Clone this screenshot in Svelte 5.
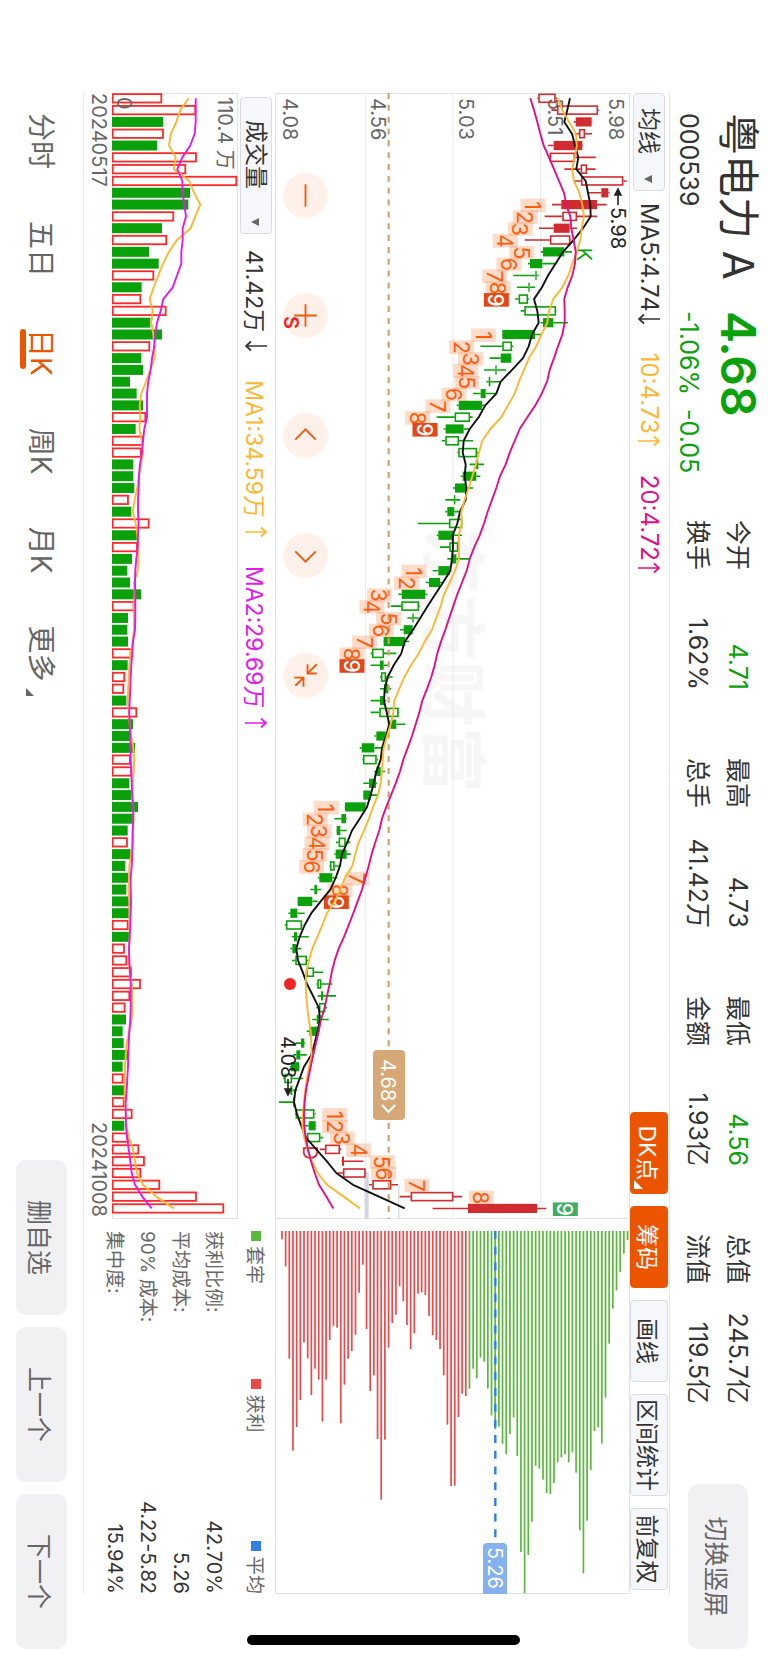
<script>
  // Kind: R/G = solid body, r/g = outlined body. Levels: low, body bottom, body top, high.
  const candles = [
    ['r', 803, 806, 858, 862], ['r', 845, 862, 985, 987], ['R', 912, 918, 966, 968], ['r', 915, 928, 946, 967],
    ['R', 835, 852, 938, 940], ['r', 836, 840, 916, 978], ['r', 884, 933, 952, 978], ['r', 916, 934, 1061, 1071],
    ['R', 952, 995, 1016, 1020], ['R', 847, 875, 982, 1011], ['r', 825, 878, 922, 983], ['R', 808, 852, 900, 922],
    ['r', 765, 841, 902, 905], ['G', 813, 820, 884, 907], ['G', 775, 781, 818, 860], ['G', 731, 797, 801, 807],
    ['G', 742, 776, 780, 796], ['g', 736, 747, 775, 778], ['g', 753, 764, 859, 860], ['G', 813, 820, 851, 895],
    ['G', 697, 698, 796, 818], ['g', 632, 698, 727, 731], ['G', 660, 693, 725, 726], ['G', 643, 677, 681, 709],
    ['G', 650, 657, 662, 694], ['G', 610, 633, 648, 680], ['G', 561, 567, 637, 645], ['g', 501, 555, 601, 609],
    ['G', 522, 528, 582, 600], ['g', 516, 527, 568, 610], ['g', 563, 566, 622, 625], ['G', 600, 618, 626, 643],
    ['G', 573, 579, 620, 632], ['G', 550, 556, 588, 610], ['G', 527, 553, 557, 572], ['G', 527, 533, 554, 575],
    ['g', 445, 538, 578, 580], ['G', 501, 506, 553, 577], ['g', 511, 539, 566, 568], ['G', 533, 547, 560, 600],
    ['G', 489, 506, 540, 545], ['G', 468, 478, 511, 517], ['G', 386, 396, 467, 473], ['g', 363, 395, 448, 450],
    ['G', 413, 428, 432, 447], ['G', 391, 402, 429, 434], ['G', 341, 342, 407, 418], ['g', 303, 307, 343, 380],
    ['G', 303, 331, 342, 357], ['g', 331, 334, 349, 369], ['G', 331, 343, 356, 365], ['G', 303, 331, 345, 350],
    ['g', 303, 329, 387, 389], ['G', 355, 363, 380, 407], ['G', 314, 320, 348, 355], ['G', 270, 276, 314, 338],
    ['g', 278, 280, 321, 325], ['G', 314, 320, 333, 347], ['G', 281, 298, 319, 322], ['G', 280, 281, 303, 325],
    ['G', 225, 226, 288, 290], ['G', 194, 215, 229, 231], ['G', 200, 201, 212, 231], ['g', 199, 207, 228, 242],
    ['G', 194, 198, 231, 243], ['g', 179, 181, 195, 212], ['G', 144, 149, 188, 203], ['G', 122, 134, 142, 155],
    ['G', 83, 84, 128, 144], ['G', 56, 62, 83, 105], ['g', 45, 49, 97, 99], ['G', 66, 73, 83, 117],
    ['G', 62, 68, 80, 95], ['g', 67, 77, 112, 116], ['g', 108, 110, 133, 160], ['g', 140, 143, 155, 188],
    ['G', 144, 154, 160, 199], ['g', 140, 148, 167, 172], ['G', 128, 141, 152, 177], ['G', 111, 119, 147, 150],
    ['G', 78, 94, 104, 106], ['G', 70, 80, 92, 111], ['G', 60, 64, 88, 90], ['g', 40, 44, 67, 100],
    ['G', 50, 62, 68, 82], ['G', 28, 70, 74, 75], ['g', 75, 78, 134, 138], ['G', 100, 117, 138, 140],
    ['g', 108, 112, 152, 160], ['r', 150, 166, 211, 215], ['R', 216, 217, 223, 281], ['r', 204, 220, 288, 290],
    ['r', 298, 308, 365, 385], ['r', 390, 423, 551, 577], ['R', 489, 595, 802, 830]
  ];

  const ma5 = [901, 893, 884, 907, 916, 926, 920, 948, 955, 962, 963, 940, 912, 880, 858, 835, 817, 793, 803,
    807, 787, 777, 760, 727, 693, 680, 647, 627, 600, 582, 579, 588, 585, 590, 588, 571, 563, 549, 550,
    547, 542, 520, 497, 474, 452, 430, 405, 395, 372, 354, 345, 343, 351, 359, 349, 337, 333, 320,
    312, 303, 292, 270, 247, 233, 217, 211, 198, 182, 153, 125, 105, 90, 80, 85, 99, 112, 130, 147,
    151, 144, 135, 125, 103, 90, 77, 73, 82, 95, 109, 140, 171, 200, 250, 328, 405];
  const ma10 = [865, 878, 898, 919, 921, 916, 907, 913, 929, 938, 943, 936, 932, 921, 908, 896, 878, 851, 838,
    833, 815, 800, 778, 763, 748, 735, 715, 695, 662, 638, 628, 619, 608, 597, 585, 575, 576, 567, 568,
    568, 556, 540, 523, 513, 500, 487, 465, 447, 424, 404, 389, 374, 371, 363, 352, 342, 339, 337,
    333, 325, 310, 298, 283, 267, 257, 248, 226, 212, 195, 172, 158, 143, 128, 118, 110, 108, 110, 113,
    117, 123, 125, 126, 118, 112, 107, 103, 100, 98, 104, 113, 127, 144, 172, 222, 271];
  const ma20 = [782, 793, 803, 812, 822, 838, 853, 868, 883, 890, 902, 905, 912, 918, 916, 908, 894, 884, 885,
    885, 878, 865, 853, 840, 832, 816, 797, 773, 750, 735, 720, 708, 691, 680, 667, 654, 643, 630, 614,
    600, 591, 577, 563, 551, 539, 527, 514, 503, 495, 485, 472, 458, 449, 438, 427, 414, 401, 391,
    378, 364, 350, 337, 329, 317, 306, 297, 287, 277, 264, 251, 237, 223, 207, 195, 186, 180, 172, 165,
    154, 147, 139, 131, 123, 116, 109, 105, 103, 104, 108, 115, 124, 135, 148, 170, 191];

  // Nine-count runs: first candle index and the level of each count label.
  const runs = [
    { start: 9, levels: [790, 767, 752, 707, 757, 718, 675, 685, 680], end: 'hot' },
    { start: 20, levels: [642, 576, 603, 588, 592, 553, 505, 444, 466], end: 'hot' },
    { start: 40, levels: [433, 411, 329, 307, 357, 335, 285, 247, 247], end: 'hot' },
    { start: 60, levels: [170, 137, 149, 142, 136, 126, 262, 211, 200], end: 'hot' },
    { start: 86, levels: [195, 195, 218, 267, 338, 342, 442, 635, 887], end: 'cool' }
  ];
  const counts = runs.flatMap((r) =>
    r.levels.map((level, k) => ({ i: r.start + k, level, n: k + 1, kind: k === 8 ? r.end : 'plain' }))
  );

  const rising = new Set([0, 1, 3, 5, 6, 7, 10, 12, 15, 17, 18, 21, 27, 29, 30, 34, 36, 38, 43, 47, 49, 50, 52, 56, 57,
    63, 70, 72, 73, 74, 75, 76, 77, 83, 85, 86, 88, 89, 90, 91, 92, 93, 94]);
  const volumes = [245, 347, 248, 250, 230, 349, 317, 470, 329, 324, 281, 245, 260, 206, 235, 221, 184, 182, 258, 210,
    245, 209, 183, 188, 149, 169, 188, 197, 166, 188, 184, 159, 159, 162, 145, 153, 207, 174, 172, 155,
    141, 149, 182, 162, 143, 141, 143, 153, 142, 134, 131, 138, 170, 158, 150, 164, 151, 155, 147, 153,
    173, 158, 142, 142, 151, 135, 145, 138, 146, 146, 144, 147, 133, 140, 154, 181, 149, 135, 137, 127,
    130, 143, 127, 129, 131, 132, 156, 132, 145, 176, 193, 182, 239, 349, 431];
  const vma1 = [325, 300, 288, 272, 266, 286, 281, 327, 341, 360, 345, 331, 290, 266, 248, 234, 220, 208, 217, 213,
    219, 223, 222, 210, 197, 183, 178, 180, 177, 184, 188, 182, 175, 171, 163, 157, 166, 171, 174, 174,
    172, 161, 163, 160, 161, 161, 157, 151, 147, 145, 144, 142, 145, 148, 153, 159, 162, 160, 157, 156,
    158, 160, 157, 156, 153, 147, 146, 144, 147, 147, 148, 148, 146, 145, 148, 155, 155, 156, 154, 147,
    139, 136, 134, 133, 133, 133, 137, 138, 145, 158, 164, 170, 188, 228, 280];
  const vma2 = [346, 346, 346, 343, 330, 306, 291, 306, 307, 312, 317, 307, 307, 303, 303, 290, 277, 249, 241, 230,
    225, 222, 215, 211, 204, 200, 200, 200, 192, 188, 185, 179, 176, 175, 173, 173, 175, 173, 172, 168,
    165, 164, 165, 165, 165, 164, 158, 156, 153, 151, 150, 148, 147, 148, 150, 151, 151, 153, 154, 156,
    158, 159, 157, 157, 156, 154, 151, 151, 152, 151, 150, 148, 146, 147, 149, 151, 151, 151, 150, 147,
    145, 144, 143, 141, 139, 136, 136, 137, 140, 145, 150, 154, 164, 186, 214];

  // Chip distribution, cheapest price first.
  const chips = [58, 139, 416, 692, 621, 540, 367, 415, 525, 446, 479, 605, 479, 360, 317, 323, 610, 494, 416, 393,
    344, 218, 134, 327, 513, 466, 657, 839, 659, 383, 309, 284, 199, 244, 315, 387, 340, 221, 217, 225,
    288, 346, 360, 387, 466, 614, 798, 797, 591, 521, 528, 506, 446, 475, 413, 425, 506, 586, 628, 620,
    671, 703, 642, 592, 708, 996, 1120, 1005, 905, 737, 746, 779, 819, 822, 789, 727, 712, 702, 727, 697,
    758, 931, 1060, 902, 750, 633, 622, 671, 533, 371, 266, 211, 156, 101, 60];
  const firstTrapped = 51;

  const cx = (i) => 5.3 + i * 11.81;
  const py = (level) => (1081 - level) / 3;
  const vy = (level) => (473 - level) / 3;
  const line = (values, y) => values.map((v, i) => `${cx(i).toFixed(1)},${y(v).toFixed(1)}`).join(' ');
  const chipY = (k) => py(37 + k * 11.03);

  const prices = [['5.98', 1038], ['5.51', 855], ['5.03', 589], ['4.56', 326], ['4.08', 60]];

  const stats = [
    ['今开', '4.71', true], ['最高', '4.73', false], ['最低', '4.56', true], ['总值', '245.7亿', false],
    ['换手', '1.62%', false], ['总手', '41.42万', false], ['金额', '1.93亿', false], ['流值', '119.5亿', false]
  ];
  const summary = [['获利比例:', '42.70%'], ['平均成本:', '5.26'], ['90% 成本:', '4.22-5.82'], ['集中度:', '15.94%']];
  const periods = ['分时', '五日', '日K', '周K', '月K', '更多'];
  let period = $state('日K');
</script>

{#snippet arrow(up)}
  <svg class="arrow" viewBox="0 0 12 22" role="img" aria-label={up ? '升' : '降'}>
    <path d={up ? 'M6 22V1M1.5 6L6 1L10.5 6' : 'M6 0V21M1.5 16L6 21L10.5 16'} />
  </svg>
{/snippet}

<div class="viewport">
  <div class="screen">
    <header>
      <div class="identity">
        <h1>粤电力 A</h1>
        <strong class="price">4.68</strong>
        <span class="code">000539</span>
        <span class="change"><span>-1.06%</span><span>-0.05</span></span>
      </div>
      <dl class="stats">
        {#each stats as [label, value, down]}
          <div><dt>{label}</dt><dd class:down>{value}</dd></div>
        {/each}
      </dl>
      <button class="soft rotate">切换竖屏</button>
    </header>

    <main>
      <div class="toolbar">
        <span class="picker">
          <select aria-label="均线"><option>均线</option></select>
          <svg class="caret" viewBox="0 0 8 8"><path d="M0 0H8L4 8Z" /></svg>
        </span>
        <div class="readings prices">
          <span>MA5:4.74{@render arrow(false)}</span>
          <span class="amber">10:4.73{@render arrow(true)}</span>
          <span class="pink">20:4.72{@render arrow(true)}</span>
        </div>
        <div class="tools">
          <button class="on dk">DK点<svg viewBox="0 0 8 8"><path d="M8 0V8H0Z" /></svg></button>
          <button class="on">筹码</button>
          <button>画线</button>
          <button>区间统计</button>
          <button>前复权</button>
        </div>
      </div>

      <div class="panels">
        <div class="kline">
          <svg viewBox="0 0 1126 355">
            <text class="watermark" x="436" y="201">东方财富</text>
            <g class="grid">
              {#each [813, 550, 287] as level}
                <line x1="0" x2="1126" y1={py(level)} y2={py(level)} />
              {/each}
              <path class="edge" d="M0.5 0.5H1125.5V354.5H0.5Z" />
            </g>
            <rect x={cx(91)} y={py(297)} width={1126 - cx(91)} height="4" fill="#d3d7de" />
            <rect x={cx(92)} y={py(389)} width={1126 - cx(92)} height="1" fill="#c9ced6" />
            {#each prices as [label, level]}
              <text class="axis" x="5" y={py(level) + 7}>{label}</text>
            {/each}
            {#each candles as [kind, low, bottom, top, high], i}
              {@const solid = kind === 'R' || kind === 'G'}
              <g class={kind === 'R' || kind === 'r' ? 'up' : 'fall'}>
                <path d="M{cx(i)} {py(high)}V{py(top)}M{cx(i)} {py(bottom)}V{py(low)}" />
                {#if solid}
                  <rect class="solid" x={cx(i) - 4.6} y={py(top)} width="9.2" height={(top - bottom) / 3} />
                {:else}
                  <rect x={cx(i) - 4} y={py(top) + 0.7} width="8" height={(top - bottom) / 3 - 1.4} />
                {/if}
              </g>
            {/each}
            <line class="last" x1="0" x2="1126" y1={py(357)} y2={py(357)} />
            <text class="mark k" x={cx(13) - 4} y={py(922)}>K</text>
            <text class="mark d" x={cx(89) - 4} y={py(101)}>D</text>
            {#each counts as c}
              <rect class="box {c.kind}" x={cx(c.i) - 6} y={py(c.level) - 12.5} width="13.6" height="25" />
              <text class="count {c.kind}" x={cx(c.i) + 1} y={py(c.level) + 8}>{c.n}</text>
            {/each}
            <polyline stroke="#111" points={line(ma5, py)} />
            <polyline stroke="#fdb733" points={line(ma10, py)} />
            <polyline stroke="#dd1188" points={line(ma20, py)} />
            <circle cx="891" cy={py(61)} r="6" fill="#f52424" />
            <text class="mark s" x="223" y={py(42)}>S</text>
            <text class="peak" x="114" y={py(1023)}>5.98</text>
            <path class="pointer" d="M112 12H97M102 9L96 12L102 15Z" />
            <text class="peak" x="943" y={py(33)}>4.08</text>
            <path class="pointer" d="M986 342H1001M996 339L1002 342L996 345Z" />
            <rect x="957" y="225" width="70" height="32" rx="4" fill="#d6a878" />
            <text class="tag" x="966" y="249">4.68</text>
            <path d="M1012 235L1019 241.5L1012 248" stroke="#fff" stroke-width="2" />
          </svg>
          <div class="controls">
            <button aria-label="缩小"><svg viewBox="-22 -22 44 44"><path d="M-11 0H11" /></svg></button>
            <button aria-label="放大"><svg viewBox="-22 -22 44 44"><path d="M-11 0H11M0 -11V11" /></svg></button>
            <button aria-label="左移"><svg viewBox="-22 -22 44 44"><path d="M4 -10L-6 0L4 10" /></svg></button>
            <button aria-label="右移"><svg viewBox="-22 -22 44 44"><path d="M-4 -10L6 0L-4 10" /></svg></button>
            <button aria-label="收起"
              ><svg viewBox="-22 -22 44 44"
                ><path d="M-11 -11L-2 -2M-11 -2H-2V-11M10 10L2 2M11 2H2V11" /></svg
              ></button
            >
          </div>
        </div>

        <svg class="chips" viewBox="0 0 375 355">
          <path class="edge" d="M0 0.5H374.5V354.5H0" />
          {#each chips as end, k}
            <rect
              x="12"
              y={chipY(k) - 0.8}
              width={(end - 33) / 3}
              height="1.7"
              fill={k < firstTrapped ? '#ea4a4a' : '#5ab83c'}
            />
          {/each}
          <line x1="12" x2="320" y1={py(677)} y2={py(677)} stroke="#2f7fe6" stroke-width="2.4" stroke-dasharray="8 7.7" />
          <path d="M375 123V147H328a4 4 0 0 1-4-4V127a4 4 0 0 1 4-4Z" fill="#85b1ee" />
          <text class="tag" x="328" y="142">5.26</text>
        </svg>

        <div class="toolbar volume">
          <span class="picker wide">
            <select aria-label="成交量"><option>成交量</option></select>
            <svg class="caret" viewBox="0 0 8 8"><path d="M0 0H8L4 8Z" /></svg>
          </span>
          <div class="readings">
            <span>41.42万{@render arrow(false)}</span>
            <span class="amber">MA1:34.59万{@render arrow(true)}</span>
            <span class="violet">MA2:29.69万{@render arrow(true)}</span>
          </div>
        </div>

        <div class="legend">
          <span><i class="trapped"></i>套牢</span><span><i class="profit"></i>获利</span><span><i class="mean"></i>平均</span>
        </div>

        <div class="volumes">
          <svg viewBox="0 0 1126 126">
            <path class="edge" d="M0.5 125.5V0.5H1125.5V125.5Z" />
            {#each volumes as v, i}
              {#if rising.has(i)}
                <rect class="gain" x={cx(i) - 4.2} y={vy(v) + 0.7} width="8.4" height={(v - 97) / 3 - 0.7} />
              {:else}
                <rect class="loss" x={cx(i) - 5} y={vy(v)} width="10" height={(v - 95) / 3} />
              {/if}
            {/each}
            <text class="axis" x="4" y="20">110.4 万</text>
            <text class="axis" x="4" y="121">0</text>
            <polyline stroke="#fdb733" points={line(vma1, vy)} />
            <polyline stroke="#e21bea" points={line(vma2, vy)} />
          </svg>
          <div class="dates"><time>20240517</time><time>20241008</time></div>
        </div>

        <dl class="summary">
          {#each summary as [label, value]}
            <div><dt>{label}</dt><dd>{value}</dd></div>
          {/each}
        </dl>
      </div>
    </main>

    <footer>
      <nav>
        {#each periods as p}
          <button class:active={p === period} onclick={() => (period = p)}
            >{p}{#if p === '更多'}<svg viewBox="0 0 8 8"><path d="M8 0V8H0Z" /></svg>{/if}</button
          >
        {/each}
      </nav>
      <div class="actions">
        <button class="soft">删自选</button>
        <button class="soft">上一个</button>
        <button class="soft">下一个</button>
      </div>
    </footer>
    <div class="home"></div>
  </div>
</div>

<style>
  :global(body) {
    background: #fff;
  }
  .viewport {
    width: 100vw;
    height: 100vh;
    overflow: hidden;
  }
  /* Landscape screen shown on a portrait window */
  .screen {
    position: relative;
    box-sizing: border-box;
    width: 100vh;
    height: 100vw;
    transform: translateX(100vw) rotate(90deg);
    transform-origin: 0 0;
    display: flex;
    flex-direction: column;
    font-family: Inter, 'Noto Sans CJK SC', sans-serif;
    color: #333;
    background: #fff;
  }
  button,
  select {
    font: inherit;
    color: inherit;
    border: 0;
    background: none;
    padding: 0;
    margin: 0;
    white-space: nowrap;
  }
  dl,
  dd,
  h1 {
    margin: 0;
  }
  svg {
    display: block;
    fill: none;
  }

  header {
    display: flex;
    height: 98px;
    padding: 0 14px 0 113px;
  }
  .identity {
    display: grid;
    grid-template-columns: 198px 209px;
    grid-template-rows: 60px 38px;
    align-items: center;
    line-height: 38px;
    font-size: 25px;
    white-space: nowrap;
  }
  h1 {
    font-size: 42px;
    font-weight: 400;
    line-height: 60px;
  }
  .price {
    font-size: 48px;
    font-weight: 600;
    line-height: 60px;
    color: #0aa10a;
  }
  .change {
    display: flex;
    gap: 14px;
    color: #0aa10a;
  }
  .stats {
    display: grid;
    grid-template-columns: repeat(4, 170px);
    column-gap: 68px;
    grid-auto-rows: 40px;
    padding-top: 10px;
    font-size: 25px;
    line-height: 40px;
    white-space: nowrap;
  }
  .stats div {
    display: flex;
    justify-content: space-between;
  }
  .stats .down {
    color: #0aa10a;
  }
  .soft {
    background: #f1f1f4;
    border-radius: 10px;
    color: #666;
    font-size: 25px;
  }
  .rotate {
    width: 165px;
    height: 60px;
    margin: 20px 0 0 auto;
  }

  main {
    flex: 1;
    margin: 0 69px 0 93px;
    border-top: 1px solid #e3e6ea;
    border-bottom: 1px solid #e9ebee;
    display: flex;
    flex-direction: column;
  }
  .toolbar {
    display: flex;
    align-items: center;
    height: 39px;
    font-size: 23px;
  }
  .volume {
    height: 37px;
  }
  .picker {
    position: relative;
    width: 98px;
  }
  .picker.wide {
    width: 137px;
    margin-left: 4px;
  }
  .picker select {
    appearance: none;
    box-sizing: border-box;
    width: 100%;
    height: 32px;
    padding-left: 14px;
    line-height: 30px;
    border: 1px solid #d9dde2;
    border-radius: 4px;
    background: #f6f7fa;
  }
  .picker.wide select {
    padding-left: 22px;
  }
  .caret {
    position: absolute;
    right: 8px;
    top: 13px;
    width: 8px;
    height: 8px;
    fill: #666;
  }
  .readings {
    display: flex;
    gap: 28px;
    margin-left: 12px;
    white-space: nowrap;
  }
  .readings span {
    display: flex;
    align-items: center;
    gap: 1px;
  }
  .prices {
    font-size: 24px;
  }
  .volume .readings {
    margin-left: 16px;
  }
  .volume .readings span {
    gap: 8px;
  }
  .arrow {
    width: 12px;
    height: 22px;
    stroke: currentColor;
    stroke-width: 1.7;
  }
  .amber {
    color: #fdb733;
  }
  .pink {
    color: #dd1188;
  }
  .violet {
    color: #e21bea;
  }
  .tools {
    display: flex;
    gap: 12px;
    margin: 0 4px 0 auto;
  }
  .tools button {
    position: relative;
    box-sizing: border-box;
    min-width: 82px;
    height: 38px;
    padding: 0 4px;
    border: 1px solid #d9dde2;
    border-radius: 4px;
    background: #f6f7fa;
  }
  .tools .on {
    background: #eb5500;
    border-color: #eb5500;
    color: #fff;
  }
  .dk svg {
    position: absolute;
    right: 4px;
    bottom: 3px;
    width: 9px;
    height: 9px;
    fill: #fff;
  }

  .panels {
    display: grid;
    grid-template-columns: 1126fr 375fr;
  }
  .kline {
    position: relative;
  }
  .kline > svg,
  .chips,
  .volumes svg {
    width: 100%;
  }
  .grid line {
    stroke: #e9eaee;
  }
  .edge {
    stroke: #dfe3e6;
  }
  .watermark {
    font-size: 66px;
    font-weight: 700;
    fill: #f6f6f7;
  }
  .axis {
    font-size: 20px;
    fill: #666;
  }
  .up,
  .fall {
    stroke-width: 1.6;
  }
  .up {
    stroke: #d02b2e;
  }
  .fall {
    stroke: #0aa10a;
  }
  .solid {
    stroke: none;
  }
  .up .solid {
    fill: #d02b2e;
  }
  .fall .solid {
    fill: #0aa10a;
  }
  .last {
    stroke: #d6a26a;
    stroke-width: 2.2;
    stroke-dasharray: 6 5.84;
  }
  polyline {
    stroke-width: 1.9;
    stroke-linejoin: round;
  }
  .box {
    fill: rgba(255, 106, 30, 0.24);
  }
  .box.hot {
    fill: #e64617;
  }
  .box.cool {
    fill: #3fae60;
  }
  .count {
    font-size: 21px;
    text-anchor: middle;
    fill: #ff5c0c;
  }
  .count.hot,
  .count.cool {
    fill: #fff;
    font-weight: 500;
  }
  .mark {
    font-size: 20px;
  }
  .k {
    fill: #0aa10a;
  }
  .d {
    fill: #d02b2e;
  }
  .s {
    fill: #f02020;
    font-weight: 600;
  }
  .peak {
    font-size: 20px;
    fill: #222;
    stroke: none;
  }
  .pointer {
    stroke: #222;
    stroke-width: 1.6;
    fill: #222;
  }
  .tag {
    font-size: 20px;
    fill: #fff;
  }
  .controls {
    position: absolute;
    left: 80px;
    bottom: 8px;
    display: flex;
    gap: 75px;
  }
  .controls button {
    width: 45px;
    height: 45px;
    border-radius: 50%;
    background: rgba(255, 96, 16, 0.09);
  }
  .controls svg {
    stroke: #f0590f;
    stroke-width: 1.8;
  }

  .legend {
    display: grid;
    grid-template-columns: 148fr 161fr auto;
    align-items: center;
    padding-left: 12px;
    font-size: 19px;
    color: #666;
  }
  .legend span {
    display: flex;
    align-items: center;
    gap: 5px;
  }
  .legend i {
    width: 10px;
    height: 10px;
  }
  .trapped {
    background: #5ab83c;
  }
  .profit {
    background: #ea4a4a;
  }
  .mean {
    background: #2f7fe6;
  }
  .gain {
    stroke: #fa2a2a;
    stroke-width: 1.8;
  }
  .loss {
    fill: #0aa10a;
  }
  .dates {
    display: flex;
    justify-content: space-between;
    padding-right: 2px;
    font-size: 20px;
    line-height: 27px;
    color: #666;
  }
  .summary {
    padding: 8px 0 0 12px;
    font-size: 20px;
    line-height: 33px;
  }
  .summary div {
    display: flex;
    justify-content: space-between;
  }
  .summary dt {
    font-size: 19px;
    color: #666;
  }

  footer {
    display: flex;
    justify-content: space-between;
    align-items: center;
    height: 83px;
    padding: 0 14px 0 113px;
  }
  nav {
    display: flex;
    gap: 52px;
    font-size: 28px;
    color: #666;
  }
  nav button {
    position: relative;
    display: flex;
    align-items: flex-end;
    gap: 6px;
    line-height: 36px;
  }
  nav button svg {
    width: 8px;
    height: 8px;
    margin-bottom: 3px;
    fill: #666;
  }
  nav .active {
    color: #eb5500;
  }
  nav .active::after {
    content: '';
    position: absolute;
    left: 0;
    bottom: -3px;
    width: 40px;
    height: 6px;
    border-radius: 3px;
    background: #eb5500;
  }
  .actions {
    display: flex;
    gap: 12px;
  }
  .actions .soft {
    width: 155px;
    height: 51px;
  }
  .home {
    position: absolute;
    right: 18px;
    top: 248px;
    bottom: 247px;
    width: 10px;
    border-radius: 5px;
    background: #000;
  }
</style>
